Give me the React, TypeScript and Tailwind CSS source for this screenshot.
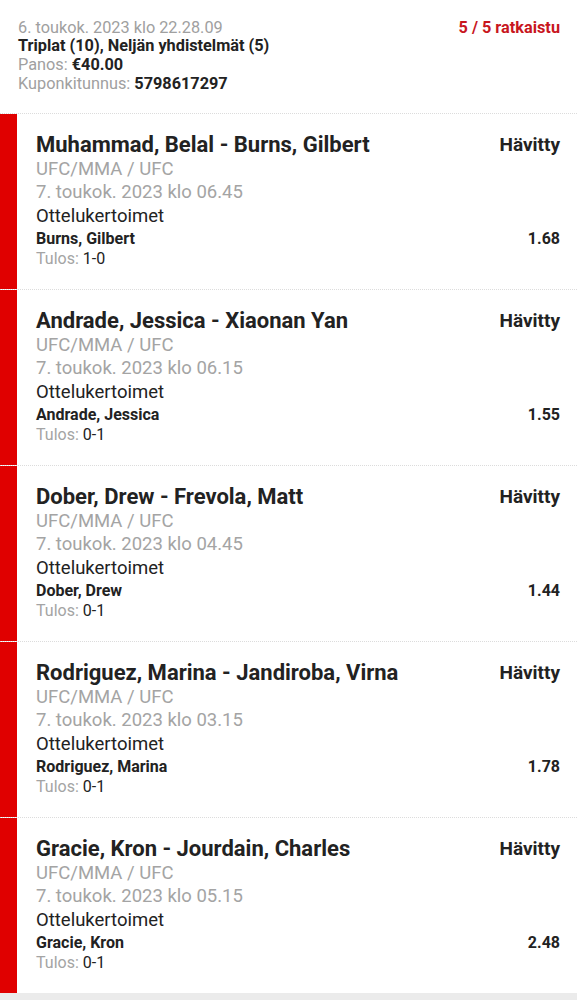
import React from "react";

type Bet = {
  title: string;
  date: string;
  pick: string;
  odds: string;
  result: string;
};

const bets: Bet[] = [
  { title: "Muhammad, Belal - Burns, Gilbert", date: "7. toukok. 2023 klo 06.45", pick: "Burns, Gilbert", odds: "1.68", result: "1-0" },
  { title: "Andrade, Jessica - Xiaonan Yan", date: "7. toukok. 2023 klo 06.15", pick: "Andrade, Jessica", odds: "1.55", result: "0-1" },
  { title: "Dober, Drew - Frevola, Matt", date: "7. toukok. 2023 klo 04.45", pick: "Dober, Drew", odds: "1.44", result: "0-1" },
  { title: "Rodriguez, Marina - Jandiroba, Virna", date: "7. toukok. 2023 klo 03.15", pick: "Rodriguez, Marina", odds: "1.78", result: "0-1" },
  { title: "Gracie, Kron - Jourdain, Charles", date: "7. toukok. 2023 klo 05.15", pick: "Gracie, Kron", odds: "2.48", result: "0-1" },
];

function Card({ b }: { b: Bet }) {
  return (
    <div className="flex border-t border-dotted border-[#dcdcdc]">
      <div className="w-[17px] shrink-0 bg-[#e00000]" />
      <div className="flex-1 pl-[19px] pr-[17px] pt-[17px] pb-[21px]">
        <div className="flex justify-between items-start">
          <div className="text-[22px] leading-[27px] font-bold text-[#222]">{b.title}</div>
          <div className="text-[19px] leading-[27px] font-bold text-[#222]">Hävitty</div>
        </div>
        <div className="text-[18.5px] leading-[23px] text-[#a4a4a4]">UFC/MMA / UFC</div>
        <div className="text-[18.5px] leading-[23px] text-[#a4a4a4]">{b.date}</div>
        <div className="text-[18.5px] leading-[24px] text-[#222]">Ottelukertoimet</div>
        <div className="flex justify-between">
          <div className="text-[16px] leading-[21px] font-bold text-[#222]">{b.pick}</div>
          <div className="text-[16px] leading-[21px] font-bold text-[#222]">{b.odds}</div>
        </div>
        <div className="text-[16px] leading-[19px] text-[#a4a4a4]">
          Tulos: <span className="text-[#222]">{b.result}</span>
        </div>
      </div>
    </div>
  );
}

export default function App() {
  return (
    <div className="w-[577px] h-[1000px] bg-[#ebebeb] overflow-hidden" style={{ fontFamily: "Roboto, 'Noto Sans', sans-serif" }}>
      <div className="bg-white">
        <div className="flex justify-between items-start pl-[18px] pr-[17px] pt-[18.5px] pb-[19.5px] text-[16.3px] leading-[18.7px]">
          <div>
            <div className="text-[#a0a0a0]">6. toukok. 2023 klo 22.28.09</div>
            <div className="font-bold text-[#222]">Triplat (10), Neljän yhdistelmät (5)</div>
            <div className="text-[#a0a0a0]">
              Panos: <span className="font-bold text-[#222]">€40.00</span>
            </div>
            <div className="text-[#a0a0a0]">
              Kuponkitunnus: <span className="font-bold text-[#222]">5798617297</span>
            </div>
          </div>
          <div className="font-bold text-[#c8161e]">5 / 5 ratkaistu</div>
        </div>
        {bets.map((b, i) => (
          <Card key={i} b={b} />
        ))}
      </div>
    </div>
  );
}
